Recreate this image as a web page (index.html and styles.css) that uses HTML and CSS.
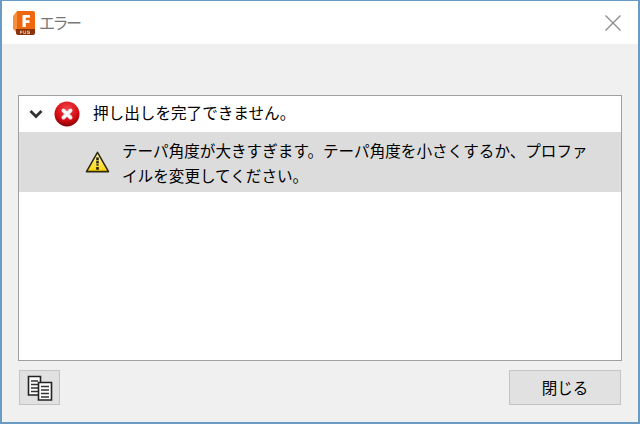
FILE: index.html
```html
<!DOCTYPE html>
<html>
<head>
	<title>エラー</title>
	<link rel="stylesheet" href="styles.css">
</head>
<body>
<div class="window">
	<div class="titlebar">
		<svg class="appIcon" width="24" height="26" viewBox="0 0 24 26">
			<path d="M1 6 L5 1 H12 V22 H4 L1 19 Z" fill="#f5903c"/>
			<path d="M5 1 H21 Q23 1 23 3 V19 H5 Z" fill="#f0660f"/>
			<path d="M4 19 H23 V23 Q23 25 21 25 H6 Q4 25 4 23 Z" fill="#8a3208"/>
			<path d="M10.500 5 H18 V7.800 H13.800 V10.200 H17.500 V13 H13.800 V17 H10.500 Z" fill="#fff"/>
			<path d="M8 20.800 H10.500 V21.500 H8.800 V22.100 H10.200 V22.700 H8.800 V23.800 H8 Z M11.300 20.800 H12.100 V23 H13.300 V20.800 H14.100 V23.800 H11.300 Z M15 20.800 H18 V21.500 H15.800 V22 H18 V23.800 H15 V23.100 H17.200 V22.600 H15 Z" fill="#f0cdb0"/>
		</svg>
		<span class="title">エラー</span>
		<svg class="closeIcon" width="18" height="18" viewBox="0 0 18 18">
			<path d="M1.500 1.500 L16.500 16.500 M16.500 1.500 L1.500 16.500" stroke="#8a8a8a" stroke-width="1.300" fill="none"/>
		</svg>
	</div>
	<div class="content">
		<div class="panel">
			<div class="mainRow">
				<svg class="chevron" width="14" height="10" viewBox="0 0 14 10">
					<path d="M1.500 2 L7 7.500 L12.500 2" stroke="#333" stroke-width="2.800" fill="none"/>
				</svg>
				<svg class="errorIcon" width="26" height="26" viewBox="0 0 26 26">
					<defs>
						<radialGradient id="red" cx="50%" cy="30%" r="70%">
							<stop offset="0" stop-color="#f0454c"/>
							<stop offset="0.650" stop-color="#d80c14"/>
							<stop offset="1" stop-color="#7f0306"/>
						</radialGradient>
					</defs>
					<circle cx="13" cy="13" r="12.500" fill="url(#red)"/>
					<path d="M9.500 9.500 L16.500 16.500 M16.500 9.500 L9.500 16.500" stroke="#e4e4e4" stroke-width="4" stroke-linecap="round" fill="none"/>
					<path d="M9.500 9.500 L16.500 16.500 M16.500 9.500 L9.500 16.500" stroke="#fff" stroke-width="2" stroke-linecap="round" fill="none"/>
				</svg>
				<span class="mainText">押し出しを完了できません。</span>
			</div>
			<div class="detailRow">
				<svg class="warnIcon" width="25" height="22" viewBox="0 0 26 24">
					<defs>
						<linearGradient id="yellow" x1="0" y1="0" x2="0" y2="1">
							<stop offset="0" stop-color="#fff8b0"/>
							<stop offset="1" stop-color="#ffd400"/>
						</linearGradient>
					</defs>
					<path d="M13 1.500 L25 22.500 H1 Z" fill="url(#yellow)" stroke="#2e2a10" stroke-width="1.700" stroke-linejoin="round"/>
					<rect x="11.600" y="7" width="2.800" height="3.200" fill="#222"/>
					<rect x="11.600" y="11" width="2.800" height="2.600" fill="#222"/>
					<rect x="11.800" y="14.300" width="2.400" height="1.800" fill="#333"/>
					<rect x="11.600" y="17.500" width="2.800" height="3" fill="#222"/>
				</svg>
				<p class="detailText">テーパ角度が大きすぎます。テーパ角度を小さくするか、プロファ<br>イルを変更してください。</p>
			</div>
		</div>
		<div class="footer">
			<button class="copyBtn">
				<svg width="26" height="26" viewBox="0 0 26 26">
					<path d="M1.500 1.500 H13.500 V20 H1.500 Z" fill="#fff" stroke="#222" stroke-width="1.600"/>
					<path d="M4 6 H11 M4 9.500 H11 M4 13 H11 M4 16.500 H11" stroke="#333" stroke-width="1.400"/>
					<path d="M11.500 7.500 H24.500 V25 H11.500 Z" fill="#fff" stroke="#222" stroke-width="1.600"/>
					<path d="M14 11.500 H22 M14 15 H22 M14 18.500 H22 M14 22 H22" stroke="#333" stroke-width="1.400"/>
				</svg>
			</button>
			<button class="closeBtn">閉じる</button>
		</div>
	</div>
</div>
</body>
</html>
```
FILE: styles.css
```css
*{
	padding: 0px;
	margin: 0px;
	box-sizing: border-box;
}
body{
	width: 640px;
	height: 424px;
	overflow: hidden;
	font-family: "Noto Sans CJK JP", "Noto Sans", sans-serif;
	color: #000;
}
.window{
	height: 424px;
	display: flex;
	flex-direction: column;
	border: 2px solid #6b9bc4;
	border-width: 1px 2px 2px 2px;
	background-color: #f0f0f0;
}
.titlebar{
	height: 43px;
	flex: none;
	display: flex;
	align-items: center;
	background-color: #fff;
	padding: 0 16px 0 10px;
}
.appIcon{
	margin-right: 3px;
}
.title{
	font-size: 16px;
	letter-spacing: -2.500px;
	color: #777;
	margin-bottom: 1px;
}
.closeIcon{
	margin-left: auto;
}
.content{
	flex: 1;
	display: flex;
	flex-direction: column;
	padding: 51px 16px 17px 16px;
}
.panel{
	height: 266px;
	background-color: #fff;
	border: 1px solid #a0a0a0;
}
.mainRow{
	height: 36px;
	display: flex;
	align-items: center;
	padding-left: 10px;
}
.chevron{
	margin-right: 11px;
}
.errorIcon{
	margin-right: 13px;
}
.mainText{
	font-size: 15.600px;
	margin-bottom: 4px;
}
.detailRow{
	height: 60px;
	display: flex;
	align-items: center;
	background-color: #dcdcdc;
	padding-left: 66px;
}
.warnIcon{
	margin-right: 12px;
}
.detailText{
	font-size: 15.600px;
	line-height: 25px;
	padding-top: 2px;
}
.footer{
	display: flex;
	justify-content: space-between;
	margin-top: 9px;
	padding: 0 1px;
}
button{
	height: 35px;
	background-color: #e1e1e1;
	border: 1px solid #c4c4c4;
	font-family: inherit;
	color: inherit;
}
.copyBtn{
	width: 41px;
	display: flex;
	align-items: center;
	justify-content: center;
}
.closeBtn{
	width: 112px;
	font-size: 15.500px;
	padding-bottom: 2px;
}
```
